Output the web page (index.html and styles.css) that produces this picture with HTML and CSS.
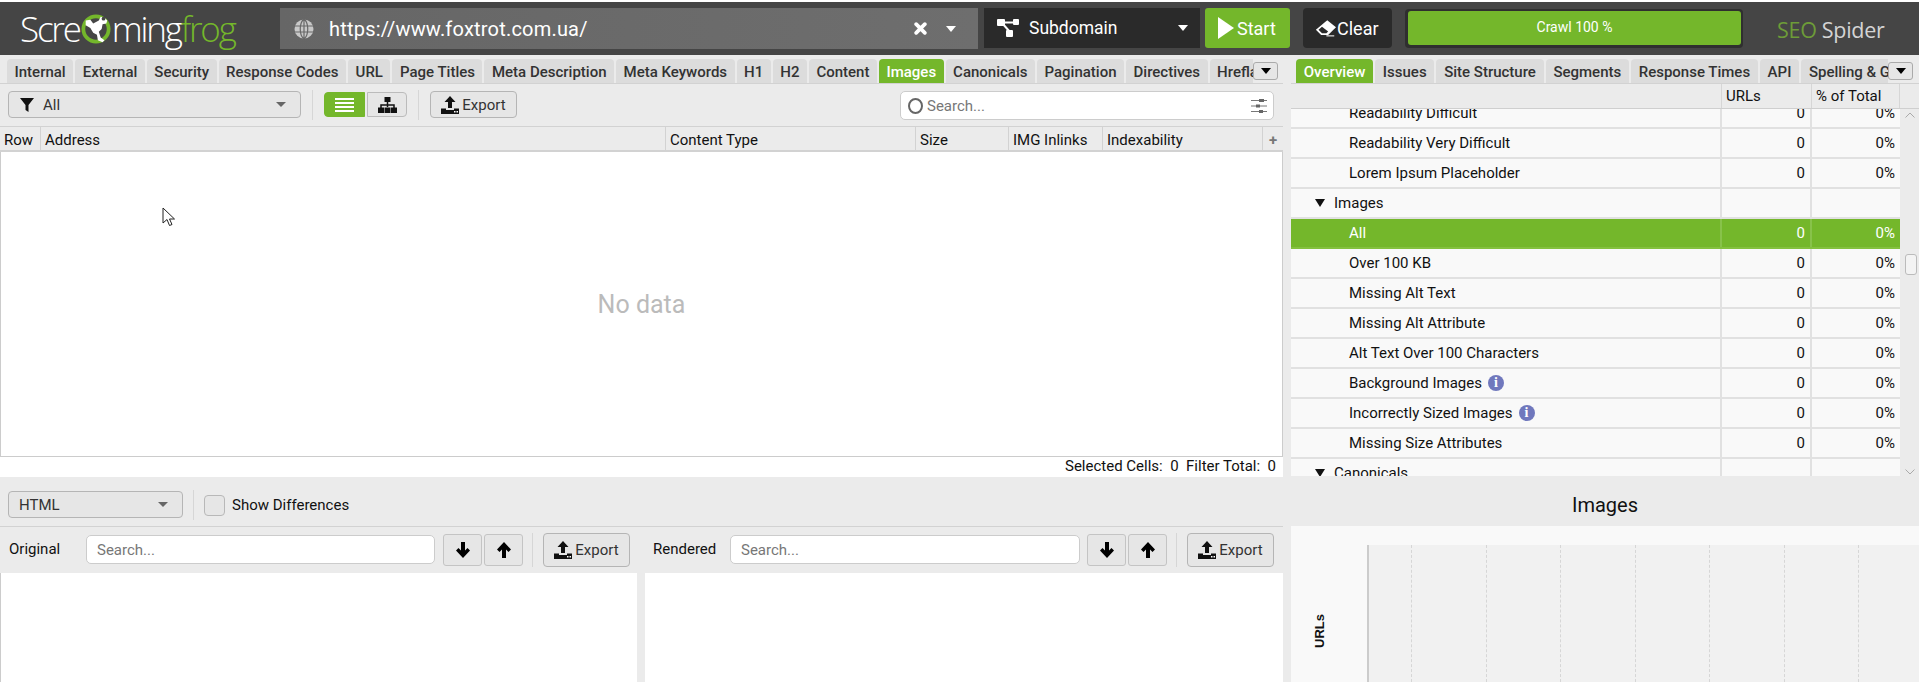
FILE: index.html
```html
<!DOCTYPE html>
<html lang="en">
<head>
<meta charset="utf-8">
<title>Screaming Frog SEO Spider</title>
<link rel="stylesheet" href="styles.css">
</head>
<body>
<header class="topbar">
  <div class="logo">
    <span class="logo-w">Scre</span>
    <svg class="logo-frog" viewBox="0 0 32 36" width="30" height="34">
      <circle cx="16" cy="18" r="13.500" fill="none" stroke="#74b72b" stroke-width="4"/>
      <path d="M5 9l5-1 3 4 6-3 2-4 4 1 3 3-1 3-4 1-1 5-3 3 2 6 4 3-2 2-5-2-1-6-4-2-3-5-5-3z" fill="#fff"/>
      <circle cx="24" cy="7" r="2" fill="#454545"/>
    </svg>
    <span class="logo-w">ming</span><span class="logo-g">frog</span>
  </div>
  <div class="urlbar">
    <svg class="globe" viewBox="0 0 20 20" width="20" height="20"><circle cx="10" cy="10" r="9.500" fill="#c8c8c8"/><path d="M0 7h20M0 13h20M10 0v20M10 0C5 4 5 16 10 20M10 0c5 4 5 16 0 20" fill="none" stroke="#686868" stroke-width="1.200"/></svg>
    <span class="url-text">https://www.foxtrot.com.ua/</span>
    <svg class="url-x" viewBox="0 0 12 12" width="13" height="13"><path d="M2 2l8 8M10 2l-8 8" stroke="#fff" stroke-width="3.400" stroke-linecap="round"/></svg>
    <span class="caret caret-white"></span>
  </div>
  <div class="scope">
    <svg viewBox="0 0 22 18" width="22" height="18"><path d="M4 3.500h14M5 4l8 9" stroke="#fff" stroke-width="2"/><rect x="0" y="0" width="8" height="7" rx="1" fill="#fff"/><rect x="16" y="0" width="6" height="6" rx="1" fill="#fff"/><rect x="9" y="11" width="7" height="7" rx="1" fill="#fff"/></svg>
    <span class="scope-text">Subdomain</span>
    <span class="caret caret-white"></span>
  </div>
  <button class="start"><svg viewBox="0 0 16 22" width="16" height="22"><path d="M0 0l16 11L0 22z" fill="#fff"/></svg>Start</button>
  <button class="clear"><svg viewBox="0 0 24 20" width="21" height="18"><path d="M14 1l10 8-9 9H7l-6-6z" fill="#fff"/><path d="M4 12l4-3.500 7 5.500-2 2H8z" fill="#2a2a2a"/><path d="M13 19h9" stroke="#fff" stroke-width="1.200"/></svg>Clear</button>
  <div class="progress"><div class="progress-fill">Crawl 100 %</div></div>
  <div class="brand"><span class="brand-g">SEO</span> Spider</div>
</header>

<div class="upper">
  <section class="left">
    <nav class="tabs tabs-left">
      <div class="tabstrip">
        <span class="tab">Internal</span><span class="tab">External</span><span class="tab">Security</span><span class="tab">Response Codes</span><span class="tab">URL</span><span class="tab">Page Titles</span><span class="tab">Meta Description</span><span class="tab">Meta Keywords</span><span class="tab">H1</span><span class="tab">H2</span><span class="tab">Content</span><span class="tab tab-on">Images</span><span class="tab">Canonicals</span><span class="tab">Pagination</span><span class="tab">Directives</span><span class="tab">Hreflang</span>
      </div>
      <button class="more"><span class="caret caret-black"></span></button>
    </nav>
    <div class="toolbar">
      <div class="select select-filter">
        <svg viewBox="0 0 14 14" width="14" height="14"><path d="M0 0h14L8.500 7v7L5.500 12V7z" fill="#111"/></svg>
        <span class="select-text">All</span>
        <span class="caret caret-gray"></span>
      </div>
      <span class="sep sep-a"></span>
      <button class="view view-on"><svg viewBox="0 0 19 14" width="19" height="14"><path d="M0 1h19M0 5h19M0 9h19M0 13h19" stroke="#fff" stroke-width="2"/></svg></button>
      <button class="view view-off"><svg viewBox="0 0 19 16" width="19" height="16"><path d="M9.500 4v6M3 11V8h13v3" stroke="#111" stroke-width="1.500" fill="none"/><rect x="6.500" width="6" height="5" fill="#111"/><rect y="10.500" width="6" height="5.500" fill="#111"/><rect x="6.500" y="10.500" width="6" height="5.500" fill="#111"/><rect x="13" y="10.500" width="6" height="5.500" fill="#111"/></svg></button>
      <span class="sep sep-b"></span>
      <button class="export export-top">
        <svg viewBox="0 0 18 18" width="18" height="18"><use href="#up"/></svg>Export
      </button>
      <div class="search search-top">
        <span class="ring"></span><span class="ph">Search...</span>
        <svg class="sliders" viewBox="0 0 16 16" width="16" height="16"><path d="M0 2.500h16M0 8h16M0 13.500h16" stroke="#777" stroke-width="1"/><rect x="8" y="1" width="5" height="3" fill="#666"/><rect x="5" y="6.500" width="4" height="3" fill="#666"/><rect x="8" y="12" width="4" height="3" fill="#666"/></svg>
      </div>
    </div>
    <div class="grid-head">
      <span class="gh gh-row">Row</span><span class="gh gh-addr">Address</span><span class="gh gh-type">Content Type</span><span class="gh gh-size">Size</span><span class="gh gh-img">IMG Inlinks</span><span class="gh gh-idx">Indexability</span><span class="gh gh-plus">+</span>
    </div>
    <div class="grid-body">
      <span class="nodata">No data</span>
      <svg class="pointer" viewBox="0 0 14 20" width="14" height="20"><path d="M1 1v15l4-3.500 2.500 6 2.500-1-2.500-5.500h5z" fill="#fff" stroke="#222" stroke-width="1"/></svg>
    </div>
    <div class="status">Selected Cells:&nbsp; 0 &nbsp;Filter Total:&nbsp; 0</div>
  </section>

  <section class="right">
    <nav class="tabs tabs-right">
      <div class="tabstrip">
        <span class="tab tab-on">Overview</span><span class="tab">Issues</span><span class="tab">Site Structure</span><span class="tab">Segments</span><span class="tab">Response Times</span><span class="tab">API</span><span class="tab">Spelling &amp; Grammar</span>
      </div>
      <button class="more"><span class="caret caret-black"></span></button>
    </nav>
    <div class="tree-head">
      <span class="th th-name"></span><span class="th th-urls">URLs</span><span class="th th-pct">% of Total</span><span class="th th-gut"></span>
    </div>
    <div class="tree-wrap">
      <div class="tree">
        <div class="tree-inner">
          <div class="tr"><span class="tn">Readability Difficult</span><span class="tv">0</span><span class="tv">0%</span></div>
          <div class="tr"><span class="tn">Readability Very Difficult</span><span class="tv">0</span><span class="tv">0%</span></div>
          <div class="tr"><span class="tn">Lorem Ipsum Placeholder</span><span class="tv">0</span><span class="tv">0%</span></div>
          <div class="tr"><span class="tn tn-group"><i class="tri"></i>Images</span><span class="tv"></span><span class="tv"></span></div>
          <div class="tr tr-on"><span class="tn">All</span><span class="tv">0</span><span class="tv">0%</span></div>
          <div class="tr"><span class="tn">Over 100 KB</span><span class="tv">0</span><span class="tv">0%</span></div>
          <div class="tr"><span class="tn">Missing Alt Text</span><span class="tv">0</span><span class="tv">0%</span></div>
          <div class="tr"><span class="tn">Missing Alt Attribute</span><span class="tv">0</span><span class="tv">0%</span></div>
          <div class="tr"><span class="tn">Alt Text Over 100 Characters</span><span class="tv">0</span><span class="tv">0%</span></div>
          <div class="tr"><span class="tn">Background Images<b class="info">i</b></span><span class="tv">0</span><span class="tv">0%</span></div>
          <div class="tr"><span class="tn">Incorrectly Sized Images<b class="info">i</b></span><span class="tv">0</span><span class="tv">0%</span></div>
          <div class="tr"><span class="tn">Missing Size Attributes</span><span class="tv">0</span><span class="tv">0%</span></div>
          <div class="tr"><span class="tn tn-group"><i class="tri"></i>Canonicals</span><span class="tv"></span><span class="tv"></span></div>
        </div>
      </div>
      <div class="vscroll">
        <svg class="chev" viewBox="0 0 10 6" width="10" height="6"><path d="M0.500 5.500L5 1l4.500 4.500" fill="none" stroke="#aaa"/></svg>
        <span class="thumb"></span>
        <svg class="chev chev-down" viewBox="0 0 10 6" width="10" height="6"><path d="M0.500 0.500L5 5l4.500-4.500" fill="none" stroke="#aaa"/></svg>
      </div>
    </div>
  </section>
</div>

<div class="lower">
  <section class="lower-left">
    <div class="opts">
      <div class="select select-html"><span class="select-text">HTML</span><span class="caret caret-gray"></span></div>
      <span class="sep sep-c"></span>
      <span class="check"></span>
      <span class="check-label">Show Differences</span>
    </div>
    <div class="split">
      <div class="pane pane-a">
        <div class="pane-bar">
          <span class="pane-label label-orig">Original</span>
          <div class="search search-pane search-a"><span class="ph">Search...</span></div>
          <button class="nav"><svg viewBox="0 0 16 16" width="16" height="16"><use href="#down"/></svg></button>
          <button class="nav"><svg viewBox="0 0 16 16" width="16" height="16"><use href="#uparrow"/></svg></button>
          <span class="sep sep-d"></span>
          <button class="export export-pane"><svg viewBox="0 0 18 18" width="18" height="18"><use href="#up"/></svg>Export</button>
        </div>
        <div class="pane-body"></div>
      </div>
      <div class="pane pane-b">
        <div class="pane-bar">
          <span class="pane-label label-rend">Rendered</span>
          <div class="search search-pane search-b"><span class="ph">Search...</span></div>
          <button class="nav"><svg viewBox="0 0 16 16" width="16" height="16"><use href="#down"/></svg></button>
          <button class="nav"><svg viewBox="0 0 16 16" width="16" height="16"><use href="#uparrow"/></svg></button>
          <span class="sep sep-d"></span>
          <button class="export export-pane"><svg viewBox="0 0 18 18" width="18" height="18"><use href="#up"/></svg>Export</button>
        </div>
        <div class="pane-body"></div>
      </div>
    </div>
  </section>
  <section class="chart">
    <div class="chart-title">Images</div>
    <div class="chart-body">
      <span class="y-label">URLs</span>
      <div class="plot"><i></i><i></i><i></i><i></i><i></i><i></i><i></i></div>
    </div>
  </section>
</div>

<svg class="defs" width="0" height="0" aria-hidden="true">
  <defs>
    <g id="up"><path d="M9 0l5.500 6H11v6H7V6H3.500z" fill="#111"/><path d="M0 12.500h5v1.500h8v-1.500h5V18H0z" fill="#111"/><rect x="13" y="15" width="1.500" height="1.500" fill="#fff"/><rect x="15.500" y="15" width="1.500" height="1.500" fill="#fff"/></g>
    <path id="down" d="M8 16L1 8.500 3.500 6 6 8.500V0h4v8.500L12.500 6 15 8.500z" fill="#000"/>
    <path id="uparrow" d="M8 0l7 7.500-2.500 2.500L10 7.500V16H6V7.500L3.500 10 1 7.500z" fill="#000"/>
  </defs>
</svg>
</body>
</html>
```
FILE: styles.css
```css
* { box-sizing: border-box; }
html, body { margin: 0; height: 682px; overflow: hidden; }
body { background: #fff; font-family: Roboto, "Liberation Sans", sans-serif; font-size: 15px; color: #111; padding-top: 2px; }
button { font-family: inherit; padding: 0; cursor: default; }
.defs { position: absolute; }

/* Top bar */
.topbar { height: 53px; background: #454545; display: flex; align-items: flex-start; }
.logo { width: 280px; height: 53px; padding: 0 0 0 20px; display: flex; align-items: center; font-family: "Open Sans", sans-serif; font-weight: 300; font-size: 35px; letter-spacing: -2.200px; line-height: 1; }
.logo-w { color: #fff; }
.logo-g { color: #74b72b; }
.logo-frog { margin: 0 1px 0 1px; flex: none; }
.urlbar { width: 698px; height: 41px; margin-top: 6px; background: linear-gradient(90deg, #666, #6e6e6e); display: flex; align-items: center; padding: 0 22px 0 14px; }
.globe { flex: none; }
.url-text { flex: 1; margin-left: 15px; font-size: 20px; letter-spacing: 0.200px; color: #fff; }
.url-x { margin-right: 19px; }
.caret { display: inline-block; width: 0; height: 0; border-style: solid; border-width: 6px 5.500px 0; border-color: transparent; flex: none; }
.caret-white { border-top-color: #fff; }
.caret-black { border-top-color: #000; }
.caret-gray { border-top-color: #666; border-width: 5px 5px 0; }
.scope { width: 216px; height: 40px; margin: 6px 0 0 6px; background: #2a2a2a; display: flex; align-items: center; padding: 0 12px 0 13px; color: #fff; }
.scope-text { flex: 1; margin-left: 10px; font-size: 17.500px; }
.start { width: 85px; height: 40px; margin: 6px 0 0 5px; background: #74b72b; border: 0; border-radius: 3px; color: #fff; font-size: 18px; display: flex; align-items: center; padding-left: 13px; gap: 3px; }
.clear { width: 89px; height: 40px; margin: 6px 0 0 13px; background: #2a2a2a; border: 0; border-radius: 4px; color: #fff; font-size: 18px; display: flex; align-items: center; padding-left: 12px; gap: 1px; }
.progress { width: 338px; height: 39px; margin: 7px 0 0 13px; background: #2f2f2f; border-radius: 4px; padding: 2px 2px 3px 3px; }
.progress-fill { height: 100%; background: #74b72b; border-radius: 3px; color: #fff; text-align: center; font-size: 14px; line-height: 32px; }
.brand { margin: 12px 0 0 34px; font-family: "Open Sans", sans-serif; font-size: 21.500px; color: #d4d4d4; letter-spacing: -0.300px; line-height: 32px; white-space: nowrap; }
.brand-g { color: #6d9c38; }

/* Upper */
.upper { display: flex; height: 421px; background: #ebebeb; }
.left { width: 1283px; flex: none; }
.right { flex: 1; min-width: 0; padding-left: 8px; }

.tabs { display: flex; height: 29px; padding-top: 4px; border-bottom: 1px solid #d2d2d2; }
.tabs-left { padding-left: 7px; padding-right: 5px; }
.tabs-right { padding-left: 5px; padding-right: 6px; }
.tabstrip { flex: 1; min-width: 0; display: flex; gap: 2px; overflow: hidden; white-space: nowrap; }
.tab { flex: none; height: 24px; line-height: 26px; padding: 0 7.500px; background: #dcdcdc; border-radius: 4px 4px 0 0; font-weight: 500; color: #333; font-size: 15px; }
.tabs-right .tab { padding: 0 7.750px; }
.tab-on { background: #74b72b; color: #fff; }
.more { flex: none; width: 25px; height: 18px; margin-top: 3px; background: #e6e6e6; border: 1px solid #aaa; border-radius: 3px; display: flex; align-items: center; justify-content: center; }

.toolbar { height: 42px; display: flex; align-items: flex-start; padding: 7px 0 0 8px; }
.select { height: 27px; background: #e6e6e6; border: 1.500px solid #b5b5b5; border-radius: 4px; display: flex; align-items: center; color: #333; }
.select-filter { width: 293px; padding: 0 14px 0 11px; }
.select-filter .select-text { margin-left: 9px; }
.select-text { flex: 1; font-size: 15px; }
.sep { display: block; width: 1px; height: 30px; background: #d6d6d6; flex: none; }
.sep-a { margin: -1px 11px 0 11px; }
.view { height: 25px; border: 1px solid #bbb; display: flex; align-items: center; justify-content: center; margin-top: 1px; }
.view-on { width: 41px; background: #74b72b; border-color: #74b72b; border-radius: 4px 0 0 4px; }
.view-off { width: 40px; margin-left: 2px; background: #e6e6e6; border-radius: 0 4px 4px 0; }
.sep-b { margin: -1px 11px 0 11px; }
.export { background: #e6e6e6; border: 1.500px solid #b5b5b5; border-radius: 4px; font-size: 15px; color: #333; display: flex; align-items: center; justify-content: center; gap: 3px; }
.export-top { width: 87px; height: 27px; }
.search { background: #fff; border: 1.500px solid #ccc; border-radius: 5px; display: flex; align-items: center; }
.search-top { width: 374px; height: 29px; margin-left: 383px; padding: 0 4px 0 7px; }
.ring { width: 15px; height: 16px; border: 2px solid #666; border-radius: 50%; flex: none; margin-right: 4px; }
.ph { flex: 1; color: #777; font-size: 15px; }
.sliders { flex: none; margin-right: 2px; }

.grid-head { height: 26px; display: flex; background: #ebebeb; border-top: 1px solid #d2d2d2; border-bottom: 2px solid #d2d2d2; line-height: 26px; }
.gh { display: block; border-right: 1px solid #d2d2d2; padding-left: 4px; color: #111; flex: none; white-space: nowrap; }
.gh-row { width: 41px; }
.gh-addr { width: 625px; }
.gh-type { width: 250px; }
.gh-size { width: 93px; }
.gh-img { width: 94px; }
.gh-idx { width: 160px; }
.gh-plus { width: 20px; border-right: 0; color: #777; font-weight: 700; text-align: center; padding: 0; }
.grid-body { position: relative; height: 305px; background: #fff; border: 1px solid #ccc; border-top: 0; display: flex; align-items: center; justify-content: center; }
.nodata { font-size: 25px; color: #bbb; }
.pointer { position: absolute; left: 161px; top: 55px; }
.status { height: 20px; background: #fff; text-align: right; padding-right: 7px; line-height: 18px; font-size: 15px; }

/* Tree */
.tree-head { display: flex; height: 25px; background: #ebebeb; border-bottom: 1px solid #cfcfcf; line-height: 25px; }
.th { display: block; flex: none; border-right: 1px solid #d6d6d6; padding-left: 4px; white-space: nowrap; }
.th-name { width: 431px; }
.th-urls { width: 90px; }
.th-pct { width: 88px; }
.th-gut { border: 0; width: 19px; }
.tree-wrap { display: flex; height: 367px; }
.tree { width: 609px; height: 367px; overflow: hidden; background: #f9f9f9; flex: none; }
.tree-inner { margin-top: -10px; }
.tr { display: flex; height: 30px; border-bottom: 2px solid #e1e1e1; line-height: 28px; }
.tn { display: flex; align-items: center; width: 431px; flex: none; padding-left: 58px; border-right: 2px solid #e1e1e1; }
.tn-group { padding-left: 24px; gap: 9px; }
.tv { display: block; flex: none; text-align: right; padding-right: 5px; border-right: 2px solid #e1e1e1; }
.tv:nth-child(2) { width: 90px; }
.tv:nth-child(3) { width: 88px; border-right: 0; }
.tr-on { background: #74b72b; color: #fff; border-bottom-color: #84c13f; }
.tr-on .tn, .tr-on .tv { border-right-color: #88c24a; }
.tri { width: 0; height: 0; border-style: solid; border-width: 8px 5px 0; border-color: #111 transparent transparent; flex: none; }
.info { display: inline-block; width: 16px; height: 16px; margin-left: 6px; border-radius: 50%; background: #7078bd; color: #fff; font-size: 14px; line-height: 16px; text-align: center; font-family: "Liberation Serif", serif; }
.vscroll { position: relative; width: 19px; height: 367px; background: #ebebeb; }
.chev { position: absolute; left: 5px; top: 3px; }
.chev-down { top: 360px; }
.thumb { position: absolute; left: 5px; top: 145px; width: 12px; height: 21px; border: 1.500px solid #bbb; border-radius: 3px; background: #f3f3f3; }

/* Lower */
.lower { display: flex; height: 206px; background: #ebebeb; }
.lower-left { width: 1283px; flex: none; display: flex; flex-direction: column; }
.opts { height: 51px; display: flex; align-items: flex-start; padding: 15px 0 0 8px; border-bottom: 1px solid #d2d2d2; }
.select-html { width: 175px; padding: 0 14px 0 10px; }
.sep-c { margin: -1px 10px 0 10px; }
.check { width: 21px; height: 21px; margin-top: 4px; border: 1.500px solid #b8b8b8; border-radius: 4px; background: #e6e6e6; }
.check-label { margin: 4px 0 0 7px; line-height: 20px; }
.split { flex: 1; display: flex; gap: 8px; }
.pane { display: flex; flex-direction: column; min-width: 0; }
.pane-a { width: 637px; }
.pane-b { flex: 1; }
.pane-bar { height: 46px; display: flex; align-items: flex-start; padding-top: 6px; }
.pane-label { line-height: 34px; margin-top: -1px; flex: none; }
.label-orig { width: 86px; padding-left: 9px; }
.label-rend { width: 85px; padding-left: 8px; }
.search-pane { height: 29px; margin-top: 2px; padding-left: 10px; }
.search-a { width: 349px; }
.search-b { width: 350px; }
.nav { width: 39px; height: 32px; margin: 1px 0 0 2px; background: #e6e6e6; border: 1.500px solid #c4c4c4; border-radius: 3px; display: flex; align-items: center; justify-content: center; }
.search-pane + .nav { margin-left: 8px; }
.search-b + .nav { margin-left: 7px; }
.sep-d { height: 34px; margin: 0 10px 0 9px; }
.export-pane { width: 87px; height: 34px; }
.pane-body { flex: 1; background: #fff; }
.pane-a .pane-body { border-left: 1px solid #ccc; }

.chart { flex: 1; min-width: 0; padding-left: 8px; display: flex; flex-direction: column; }
.chart-title { height: 50px; text-align: center; font-size: 20px; line-height: 58px; }
.chart-body { flex: 1; background: #f9f9f9; display: flex; padding: 19px 18px 0 76px; position: relative; }
.y-label { position: absolute; left: 20px; top: 88px; font-family: "Liberation Sans", sans-serif; font-weight: 700; font-size: 13px; line-height: 18px; writing-mode: vertical-rl; transform: rotate(180deg); }
.plot { flex: 1; background: #f1f1f1; border-left: 2px solid #ccc; display: flex; padding-left: 42px; }
.plot i { display: block; width: 74.500px; flex: none; border-left: 1px dashed #d6d6d6; }
```
